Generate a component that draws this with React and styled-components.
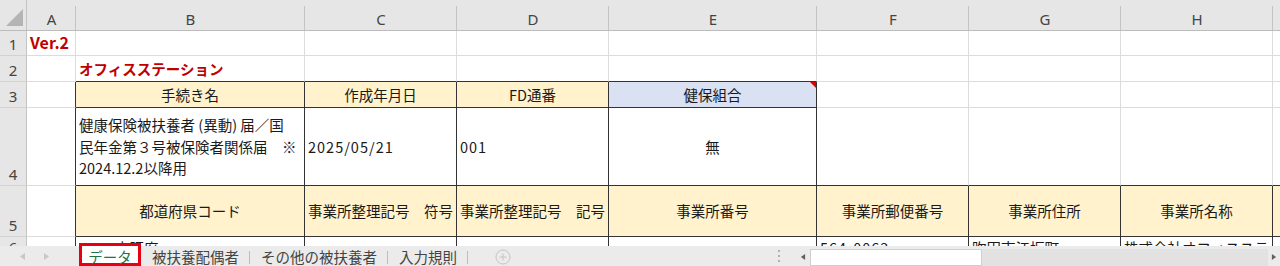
import React from 'react';
import styled, { createGlobalStyle } from 'styled-components';

const GlobalStyle = createGlobalStyle`
  html, body {
    margin: 0;
    padding: 0;
    background: #fff;
    overflow: hidden;
  }
  body {
    font-family: "Noto Sans CJK JP", "Noto Sans", sans-serif;
  }
`;

const YELLOW = '#FFF2CC';
const BLUE = '#D9E1F2';
const GRID = '#DCDCDC';
const DARK = '#333';

const COLS = [
  { key: 'A', width: 49 },
  { key: 'B', width: 229 },
  { key: 'C', width: 152 },
  { key: 'D', width: 152 },
  { key: 'E', width: 208 },
  { key: 'F', width: 152 },
  { key: 'G', width: 152 },
  { key: 'H', width: 152 },
  { key: 'I', width: 152 },
];

const ROW_HEIGHTS = [25, 26, 26, 78, 51, 22];

// cells keyed by row index (0-based -> row 1) and column key
const DATA = {
  0: { A: { text: 'Ver.2', red: true, bold: true, size: 16 } },
  1: { B: { text: 'オフィスステーション', red: true, bold: true } },
  2: {
    B: { text: '手続き名', fill: YELLOW, align: 'center', box: true },
    C: { text: '作成年月日', fill: YELLOW, align: 'center', box: true },
    D: { text: 'FD通番', fill: YELLOW, align: 'center', box: true },
    E: { text: '健保組合', fill: BLUE, align: 'center', box: true, comment: true },
  },
  3: {
    B: {
      lines: ['健康保険被扶養者 (異動) 届／国', '民年金第３号被保険者関係届　※', '2024.12.2以降用'],
      box: true,
    },
    C: { text: '2025/05/21', box: true, wide: true },
    D: { text: '001', box: true, wide: true },
    E: { text: '無', align: 'center', box: true },
  },
  4: {
    B: { text: '都道府県コード', fill: YELLOW, align: 'center', box: true },
    C: { text: '事業所整理記号　符号', fill: YELLOW, align: 'center', box: true },
    D: { text: '事業所整理記号　記号', fill: YELLOW, align: 'center', box: true },
    E: { text: '事業所番号', fill: YELLOW, align: 'center', box: true },
    F: { text: '事業所郵便番号', fill: YELLOW, align: 'center', box: true },
    G: { text: '事業所住所', fill: YELLOW, align: 'center', box: true },
    H: { text: '事業所名称', fill: YELLOW, align: 'center', box: true },
    I: { text: '', fill: YELLOW, box: true },
  },
  5: {
    B: { text: '大阪府', indent: 36, box: true },
    C: { text: '', box: true },
    D: { text: '', box: true },
    E: { text: '', box: true },
    F: { text: '564-0063', box: true, wide: true },
    G: { text: '吹田市江坂町', box: true },
    H: { text: '株式会社オフィスステーション', box: true },
    I: { text: '-', box: true },
  },
};

const isBoxed = (r, c) => {
  const col = COLS[c];
  if (!col) return false;
  const cell = DATA[r] && DATA[r][col.key];
  return !!(cell && cell.box);
};

const Sheet = styled.div`
  width: 1280px;
  height: 266px;
  display: flex;
  flex-direction: column;
  overflow: hidden;
`;

const GridArea = styled.div`
  flex: 1;
  overflow: hidden;
  display: grid;
  grid-template-columns: 27px ${COLS.map((c) => c.width + 'px').join(' ')};
  grid-template-rows: 31px ${ROW_HEIGHTS.map((h) => h + 'px').join(' ')};
`;

const Corner = styled.div`
  box-sizing: border-box;
  background: #e6e6e6;
  border-right: 1px solid #c4c4c4;
  border-bottom: 1px solid #bcbcbc;
  display: flex;
  align-items: flex-end;
  justify-content: flex-end;
  padding: 0 2px 3px 0;
`;

const ColHead = styled.div`
  box-sizing: border-box;
  position: relative;
  background: #e6e6e6;
  border-bottom: 1px solid #bcbcbc;
  display: flex;
  align-items: center;
  justify-content: center;
  padding-top: 7px;
  font-family: "Noto Sans", "Liberation Sans", sans-serif;
  font-size: 15px;
  color: #444;

  &::after {
    content: '';
    position: absolute;
    right: 0;
    top: 6px;
    bottom: 0;
    width: 1px;
    background: #c4c4c4;
  }
`;

const RowHead = styled.div`
  box-sizing: border-box;
  background: #e6e6e6;
  border-right: 1px solid #c4c4c4;
  border-bottom: 1px solid #d2d2d2;
  display: flex;
  align-items: flex-end;
  justify-content: center;
  padding-bottom: 1px;
  font-family: "Noto Sans", "Liberation Sans", sans-serif;
  font-size: 15px;
  color: #444;
`;

const Cell = styled.div`
  box-sizing: border-box;
  position: relative;
  border-right: 1px solid ${(p) => (p.$darkRight ? DARK : GRID)};
  border-bottom: 1px solid ${(p) => (p.$darkBottom ? DARK : GRID)};
  background: ${(p) => p.$fill || '#fff'};
  display: flex;
  flex-direction: column;
  justify-content: center;
  align-items: ${(p) => (p.$align === 'center' ? 'center' : 'flex-start')};
  padding: 0 3px 0 ${(p) => 3 + (p.$indent || 0)}px;
  font-size: ${(p) => p.$size || 14.5}px;
  line-height: 21.5px;
  letter-spacing: ${(p) => (p.$wide ? '1px' : '0')};
  color: ${(p) => (p.$red ? '#C00000' : '#1a1a1a')};
  font-weight: ${(p) => (p.$bold ? 700 : 400)};
  white-space: nowrap;
  overflow: ${(p) => (p.$spill ? 'visible' : 'hidden')};
  z-index: ${(p) => (p.$spill ? 1 : 0)};

  &::after {
    content: '';
    display: ${(p) => (p.$comment ? 'block' : 'none')};
    position: absolute;
    top: 0;
    right: 0;
    border-top: 6px solid #e00000;
    border-left: 6px solid transparent;
  }
`;

const TabBar = styled.div`
  height: 20px;
  flex-shrink: 0;
  display: flex;
  align-items: center;
  background: #ebebeb;
  font-size: 14.5px;
  color: #444;
  position: relative;
  z-index: 2;
`;

const NavArrows = styled.div`
  width: 79px;
  display: flex;
  align-items: center;
  gap: 17px;
  padding-left: 19px;
  box-sizing: border-box;
`;

const ActiveTab = styled.div`
  box-sizing: border-box;
  width: 62px;
  height: 23px;
  margin-top: -3px;
  border: 3px solid #e50012;
  background: #fff;
  color: #217346;
  display: flex;
  align-items: center;
  justify-content: center;
  padding-top: 3px;
  white-space: nowrap;
`;

const Tab = styled.div`
  position: relative;
  padding: 2px 11px 0;
  margin-left: ${(p) => (p.$first ? '-3px' : '0')};
  white-space: nowrap;
  line-height: 18px;

  &::after {
    content: '';
    position: absolute;
    right: 0;
    top: 5px;
    height: 13px;
    width: 1px;
    background: #bdbdbd;
  }
`;

const AddSheet = styled.div`
  margin-left: 27px;
  display: flex;
  align-items: center;
  padding-top: 2px;
`;

const Spacer = styled.div`
  flex: 1;
`;

const Dots = styled.div`
  width: 4px;
  margin-right: 14px;
  display: flex;
  align-items: center;
`;

const Scroller = styled.div`
  width: 485px;
  height: 100%;
  display: flex;
  align-items: center;
`;

const ScrollBtn = styled.div`
  width: ${(p) => p.$w}px;
  display: flex;
  align-items: center;
  justify-content: center;
  padding-top: 2px;
`;

const Thumb = styled.div`
  box-sizing: border-box;
  width: 172px;
  height: 17px;
  margin-top: 2px;
  background: #fff;
  border: 1px solid #cfcfcf;
`;

const Trough = styled.div`
  flex: 1;
  height: 17px;
  margin-top: 2px;
  background: #e2e2e2;
`;

const Arrow = ({ dir, color = '#b8b8b8', size = 7 }) => (
  <svg width={size} height={size + 2} viewBox="0 0 7 9">
    {dir === 'left' ? (
      <polygon points="6,1 1,4.5 6,8" fill={color} />
    ) : (
      <polygon points="1,1 6,4.5 1,8" fill={color} />
    )}
  </svg>
);

const App = () => {
  const cells = [];
  cells.push(
    <Corner key="corner">
      <svg width="18" height="18" viewBox="0 0 18 18">
        <polygon points="17,0 17,17 0,17" fill="#b4b4b4" />
      </svg>
    </Corner>
  );
  COLS.forEach((c) => cells.push(<ColHead key={'h' + c.key}>{c.key}</ColHead>));

  ROW_HEIGHTS.forEach((_, r) => {
    cells.push(<RowHead key={'r' + r}>{r + 1}</RowHead>);
    COLS.forEach((col, c) => {
      const cell = (DATA[r] && DATA[r][col.key]) || {};
      const darkRight = isBoxed(r, c) || isBoxed(r, c + 1);
      const darkBottom = isBoxed(r, c) || isBoxed(r + 1, c);
      cells.push(
        <Cell
          key={r + col.key}
          $darkRight={darkRight}
          $darkBottom={darkBottom}
          $fill={cell.fill}
          $align={cell.align}
          $red={cell.red}
          $bold={cell.bold}
          $size={cell.size}
          $wide={cell.wide}
          $comment={cell.comment}
          $indent={cell.indent}
          $spill={!cell.box && !!cell.text}
        >
          {cell.lines
            ? cell.lines.map((l) => <span key={l}>{l}</span>)
            : cell.text}
        </Cell>
      );
    });
  });

  return (
    <Sheet>
      <GlobalStyle />
      <GridArea>{cells}</GridArea>
      <TabBar>
        <NavArrows>
          <Arrow dir="left" color="#c8c8c8" />
          <Arrow dir="right" color="#c8c8c8" />
        </NavArrows>
        <ActiveTab>データ</ActiveTab>
        <Tab>被扶養配偶者</Tab>
        <Tab>その他の被扶養者</Tab>
        <Tab>入力規則</Tab>
        <AddSheet>
          <svg width="16" height="16" viewBox="0 0 16 16">
            <circle cx="8" cy="8" r="7" fill="none" stroke="#c4c4c4" strokeWidth="1" />
            <path d="M8 4.5v7M4.5 8h7" stroke="#c4c4c4" strokeWidth="1" />
          </svg>
        </AddSheet>
        <Spacer />
        <Dots>
          <svg width="4" height="14" viewBox="0 0 4 14">
            <rect x="1" y="1" width="2" height="2" fill="#b0b0b0" />
            <rect x="1" y="6" width="2" height="2" fill="#b0b0b0" />
            <rect x="1" y="11" width="2" height="2" fill="#b0b0b0" />
          </svg>
        </Dots>
        <Scroller>
          <ScrollBtn $w={15}>
            <Arrow dir="left" color="#606060" size={6} />
          </ScrollBtn>
          <Thumb />
          <Trough />
          <ScrollBtn $w={12}>
            <Arrow dir="right" color="#606060" size={6} />
          </ScrollBtn>
        </Scroller>
      </TabBar>
    </Sheet>
  );
};

export default App;
